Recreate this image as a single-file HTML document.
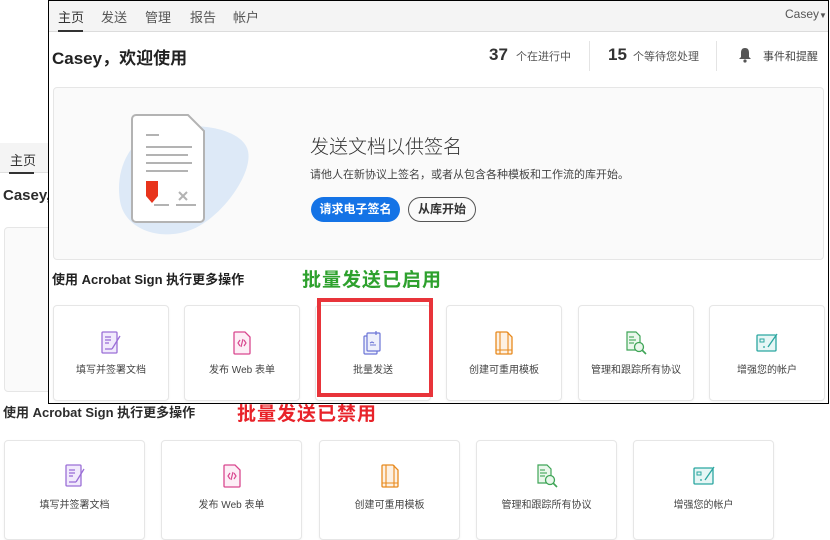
<!DOCTYPE html>
<html><head><meta charset="utf-8"><style>
*{margin:0;padding:0;box-sizing:border-box}
body{width:830px;height:538px;overflow:hidden;background:#fff;position:relative;font-family:"Liberation Sans","Noto Sans CJK SC",sans-serif;color:#2c2c2c}
.a{position:absolute;white-space:nowrap}
.card{position:absolute;background:#fff;border:1px solid #e6e6e6;border-radius:4px;box-shadow:0 1px 2px rgba(0,0,0,.05)}
.card svg{position:absolute;left:50%;transform:translateX(-50%)}
.card span{position:absolute;left:0;right:0;text-align:center;font-size:10px;color:#444}
</style></head><body>
<!-- background page -->
<div class="a" style="left:0;top:143px;width:60px;height:30px;background:#f4f4f4;border-bottom:1px solid #e0e0e0"></div>
<div class="a" style="left:10px;top:150px;font-size:13px;color:#333">主页</div>
<div class="a" style="left:9px;top:172px;width:25px;height:2px;background:#333"></div>
<div class="a" style="left:3px;top:187px;font-size:15px;font-weight:bold">Casey,</div>
<div class="a" style="left:4px;top:227px;width:60px;height:165px;border:1px solid #e6e6e6;border-radius:4px;background:#fafafa"></div>
<div class="a" style="left:3px;top:402px;font-size:13px;font-weight:bold">使用 Acrobat Sign 执行更多操作</div>
<div class="a" style="left:237px;top:399px;font-size:19px;font-weight:bold;color:#e8232a;letter-spacing:1px">批量发送已禁用</div>

<!-- overlay window -->
<div class="a" style="left:48px;top:0;width:781px;height:404px;border:1px solid #000;background:#fff;overflow:hidden">
 <div class="a" style="left:0;top:0;width:781px;height:31px;background:#f4f4f4;border-bottom:1px solid #dcdcdc"></div>
 <div class="a" style="left:9px;top:6px;font-size:13px;color:#333">主页</div>
 <div class="a" style="left:9px;top:29px;width:25px;height:2px;background:#333"></div>
 <div class="a" style="left:52px;top:6px;font-size:13px;color:#555">发送</div>
 <div class="a" style="left:96px;top:6px;font-size:13px;color:#555">管理</div>
 <div class="a" style="left:141px;top:6px;font-size:13px;color:#555">报告</div>
 <div class="a" style="left:184px;top:6px;font-size:13px;color:#555">帐户</div>
 <div class="a" style="left:736px;top:6px;font-size:12px;color:#555">Casey<span style="font-size:8px">▼</span></div>
 <div class="a" style="left:3px;top:43px;font-size:17px;font-weight:bold;color:#222">Casey，欢迎使用</div>
 <div class="a" style="left:440px;top:44px;font-size:17px;font-weight:bold;color:#333">37</div>
 <div class="a" style="left:467px;top:47px;font-size:11px;color:#555">个在进行中</div>
 <div class="a" style="left:540px;top:40px;width:1px;height:30px;background:#e4e4e4"></div>
 <div class="a" style="left:559px;top:44px;font-size:17px;font-weight:bold;color:#333">15</div>
 <div class="a" style="left:584px;top:47px;font-size:11px;color:#555">个等待您处理</div>
 <div class="a" style="left:667px;top:40px;width:1px;height:30px;background:#e4e4e4"></div>
 <svg class="a" style="left:689px;top:46px" width="14" height="16" viewBox="0 0 14 16"><path d="M7 1c-3 0-4 2-4 5v4l-2 2h12l-2-2V6c0-3-1-5-4-5z" fill="#555"/><circle cx="7" cy="14" r="1.6" fill="#555"/></svg>
 <div class="a" style="left:714px;top:47px;font-size:11px;color:#444">事件和提醒</div>

 <div class="a" style="left:4px;top:86px;width:771px;height:173px;background:#fafafa;border:1px solid #e6e6e6;border-radius:4px"></div>
 <svg class="a" style="left:54px;top:110px" width="150" height="130" viewBox="0 0 150 130">
  <path d="M60 18c35-8 80 0 85 22s-25 65-55 78-68 2-73-28 8-64 43-72z" fill="#dde9f7"/>
  <path d="M33 4h52l16 16v87a4 4 0 0 1-4 4H33a4 4 0 0 1-4-4V8a4 4 0 0 1 4-4z" fill="#fff" stroke="#b3b3b3" stroke-width="2"/>
  <g stroke="#b3b3b3" stroke-width="2"><line x1="43" y1="24" x2="56" y2="24"/><line x1="43" y1="36" x2="89" y2="36"/><line x1="43" y1="44" x2="85" y2="44"/><line x1="43" y1="52" x2="89" y2="52"/><line x1="43" y1="60" x2="85" y2="60"/><line x1="51" y1="94" x2="66" y2="94"/><line x1="73" y1="94" x2="93" y2="94"/><path d="M76 81l8 8M84 81l-8 8"/></g>
  <path d="M43 70h12v15l-6 7-6-7z" fill="#e8341c"/>
 </svg>
 <div class="a" style="left:261px;top:131px;font-size:19px;color:#333;font-weight:300">发送文档以供签名</div>
 <div class="a" style="left:261px;top:165px;font-size:11px;color:#444">请他人在新协议上签名，或者从包含各种模板和工作流的库开始。</div>
 <div class="a" style="left:262px;top:196px;width:89px;height:25px;border-radius:13px;background:#1473e6;color:#fff;font-size:12px;font-weight:bold;text-align:center;line-height:25px">请求电子签名</div>
 <div class="a" style="left:359px;top:196px;width:68px;height:25px;border-radius:13px;border:1.5px solid #555;color:#333;font-size:12px;font-weight:bold;text-align:center;line-height:22px">从库开始</div>

 <div class="a" style="left:3px;top:268px;font-size:13px;font-weight:bold;color:#222">使用 Acrobat Sign 执行更多操作</div>
 <div class="a" style="left:253px;top:264px;font-size:19px;font-weight:bold;color:#2ea12e;letter-spacing:1px">批量发送已启用</div>

 <div class="card" style="left:4px;top:304px;width:116px;height:96px"><svg style="top:24px" width="22" height="26" viewBox="0 0 22 26"><rect x="2" y="2" width="15" height="21" rx="1" fill="#f1eafc" stroke="#9b6fd6" stroke-width="1.3"/><g stroke="#9b6fd6" stroke-width="1.3"><line x1="5" y1="7" x2="11" y2="7"/><line x1="5" y1="10" x2="11" y2="10"/><line x1="5" y1="13" x2="9" y2="13"/><path d="M20 6l-8 13"/><line x1="5" y1="19" x2="12" y2="19"/></g></svg><span style="top:55px">填写并签署文档</span></div>
 <div class="card" style="left:135px;top:304px;width:116px;height:96px"><svg style="top:24px" width="20" height="26" viewBox="0 0 20 26"><path d="M3 2h10l5 5v16a1 1 0 0 1-1 1H3a1 1 0 0 1-1-1V3a1 1 0 0 1 1-1z" fill="#fdeef6" stroke="#d9488f" stroke-width="1.3"/><path d="M8 10l-2 3 2 3M12 10l2 3-2 3M11 9l-2 8" stroke="#d9488f" stroke-width="1.2" fill="none"/></svg><span style="top:55px">发布 Web 表单</span></div>
 <div class="card" style="left:266px;top:304px;width:116px;height:96px"><svg style="top:24px" width="22" height="26" viewBox="0 0 22 26"><rect x="2" y="6" width="13" height="18" rx="1" fill="#eef0fb" stroke="#6b74d6" stroke-width="1.2"/><rect x="5" y="3" width="13" height="18" rx="1" fill="#eef0fb" stroke="#6b74d6" stroke-width="1.2"/><path d="M8 15h6M8 13l2-1 2 1" stroke="#6b74d6" stroke-width="1.1" fill="none"/><path d="M14 1v4" stroke="#6b74d6" stroke-width="1.2"/></svg><span style="top:55px">批量发送</span></div>
 <div class="card" style="left:397px;top:304px;width:116px;height:96px"><svg style="top:24px" width="20" height="26" viewBox="0 0 20 26"><path d="M3 2h10l5 5v16a1 1 0 0 1-1 1H3a1 1 0 0 1-1-1V3a1 1 0 0 1 1-1z" fill="#fdf1e3" stroke="#e88a1e" stroke-width="1.3"/><path d="M6 2v22M14 2v22M2 20h16" stroke="#e88a1e" stroke-width="1.1"/></svg><span style="top:55px">创建可重用模板</span></div>
 <div class="card" style="left:529px;top:304px;width:116px;height:96px"><svg style="top:24px" width="24" height="26" viewBox="0 0 24 26"><path d="M3 2h9l4 4v14H3z" fill="#eaf7ec" stroke="#3fa557" stroke-width="1.2"/><g stroke="#3fa557" stroke-width="1.1"><line x1="5" y1="7" x2="10" y2="7"/><line x1="5" y1="10" x2="12" y2="10"/><line x1="5" y1="13" x2="10" y2="13"/></g><circle cx="15" cy="17" r="4.5" fill="#eaf7ec" stroke="#3fa557" stroke-width="1.3"/><path d="M18 20l4 4" stroke="#3fa557" stroke-width="1.6"/></svg><span style="top:55px">管理和跟踪所有协议</span></div>
 <div class="card" style="left:660px;top:304px;width:116px;height:96px"><svg style="top:25px" width="24" height="24" viewBox="0 0 24 24"><rect x="2" y="4" width="19" height="16" rx="1" fill="#e6f6f5" stroke="#2ba6a0" stroke-width="1.3"/><rect x="5" y="8" width="4" height="3" fill="none" stroke="#2ba6a0"/><path d="M22 3l-9 13M8 16h2" stroke="#2ba6a0" stroke-width="1.3"/></svg><span style="top:55px">增强您的帐户</span></div>

 <div class="a" style="left:268px;top:297px;width:116px;height:99px;border:4px solid #e8343a"></div>
</div>

<!-- bottom cards -->
<div class="card" style="left:4px;top:440px;width:141px;height:100px"><svg style="top:22px" width="22" height="26" viewBox="0 0 22 26"><rect x="2" y="2" width="15" height="21" rx="1" fill="#f1eafc" stroke="#9b6fd6" stroke-width="1.3"/><g stroke="#9b6fd6" stroke-width="1.3"><line x1="5" y1="7" x2="11" y2="7"/><line x1="5" y1="10" x2="11" y2="10"/><line x1="5" y1="13" x2="9" y2="13"/><path d="M20 6l-8 13"/><line x1="5" y1="19" x2="12" y2="19"/></g></svg><span style="top:55px">填写并签署文档</span></div>
<div class="card" style="left:161px;top:440px;width:141px;height:100px"><svg style="top:22px" width="20" height="26" viewBox="0 0 20 26"><path d="M3 2h10l5 5v16a1 1 0 0 1-1 1H3a1 1 0 0 1-1-1V3a1 1 0 0 1 1-1z" fill="#fdeef6" stroke="#d9488f" stroke-width="1.3"/><path d="M8 10l-2 3 2 3M12 10l2 3-2 3M11 9l-2 8" stroke="#d9488f" stroke-width="1.2" fill="none"/></svg><span style="top:55px">发布 Web 表单</span></div>
<div class="card" style="left:319px;top:440px;width:141px;height:100px"><svg style="top:22px" width="20" height="26" viewBox="0 0 20 26"><path d="M3 2h10l5 5v16a1 1 0 0 1-1 1H3a1 1 0 0 1-1-1V3a1 1 0 0 1 1-1z" fill="#fdf1e3" stroke="#e88a1e" stroke-width="1.3"/><path d="M6 2v22M14 2v22M2 20h16" stroke="#e88a1e" stroke-width="1.1"/></svg><span style="top:55px">创建可重用模板</span></div>
<div class="card" style="left:476px;top:440px;width:141px;height:100px"><svg style="top:22px" width="24" height="26" viewBox="0 0 24 26"><path d="M3 2h9l4 4v14H3z" fill="#eaf7ec" stroke="#3fa557" stroke-width="1.2"/><g stroke="#3fa557" stroke-width="1.1"><line x1="5" y1="7" x2="10" y2="7"/><line x1="5" y1="10" x2="12" y2="10"/><line x1="5" y1="13" x2="10" y2="13"/></g><circle cx="15" cy="17" r="4.5" fill="#eaf7ec" stroke="#3fa557" stroke-width="1.3"/><path d="M18 20l4 4" stroke="#3fa557" stroke-width="1.6"/></svg><span style="top:55px">管理和跟踪所有协议</span></div>
<div class="card" style="left:633px;top:440px;width:141px;height:100px"><svg style="top:23px" width="24" height="24" viewBox="0 0 24 24"><rect x="2" y="4" width="19" height="16" rx="1" fill="#e6f6f5" stroke="#2ba6a0" stroke-width="1.3"/><rect x="5" y="8" width="4" height="3" fill="none" stroke="#2ba6a0"/><path d="M22 3l-9 13M8 16h2" stroke="#2ba6a0" stroke-width="1.3"/></svg><span style="top:55px">增强您的帐户</span></div>
</body></html>
